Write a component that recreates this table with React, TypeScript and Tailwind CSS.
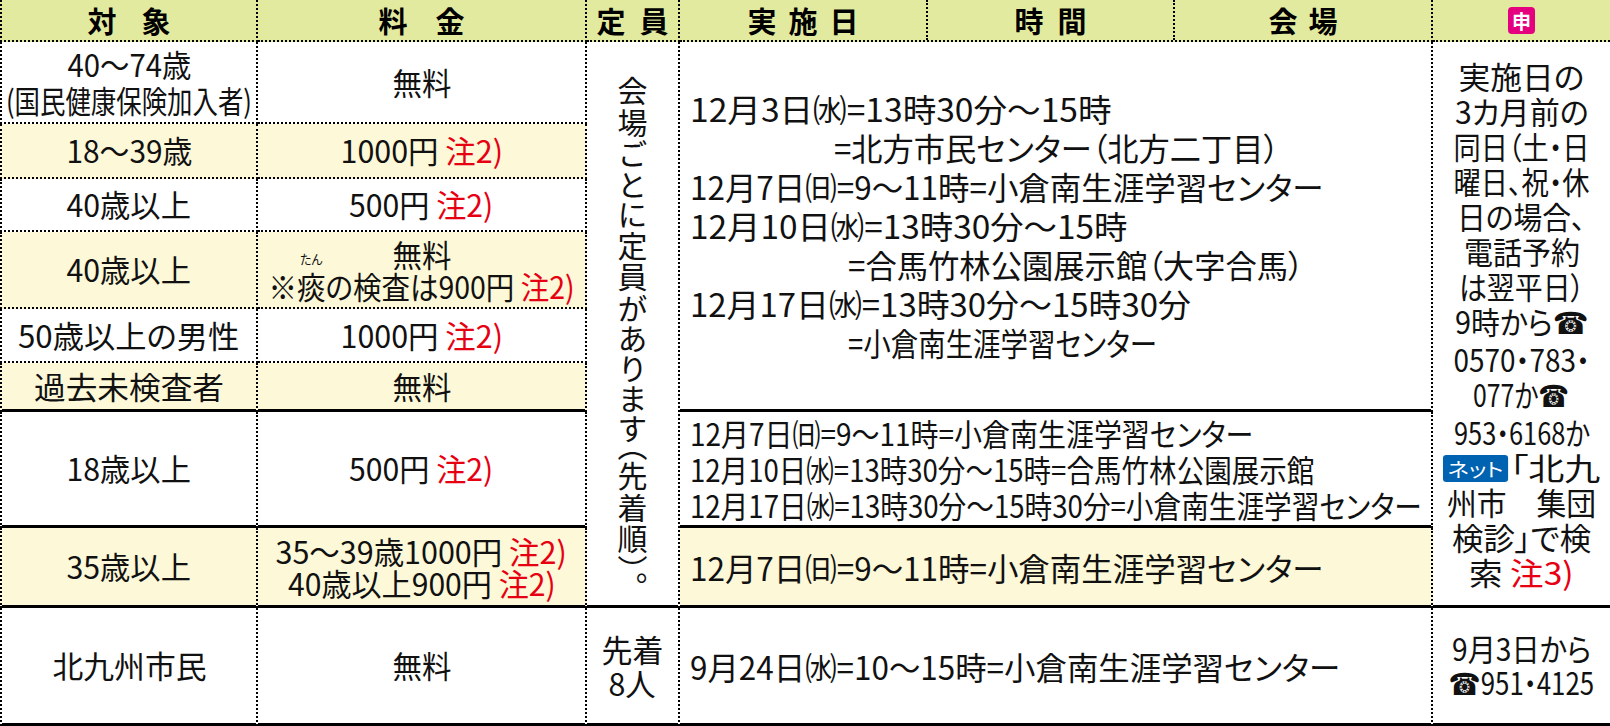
import { useLayoutEffect, useRef, useState, type ReactNode } from "react";

type FitProps = {
  w: number;
  left?: boolean;
  className?: string;
  children: ReactNode;
};

// Squeezes one line of text horizontally so it spans w pixels (the print uses a condensed face).
function Fit({ w, left = false, className = "", children }: FitProps) {
  const ref = useRef<HTMLSpanElement>(null);
  const [scale, setScale] = useState(1);

  useLayoutEffect(() => {
    const measure = () => {
      const natural = ref.current?.offsetWidth ?? 0;
      if (natural > 0) setScale(w / natural);
    };
    measure();
    document.fonts?.ready.then(measure);
  }, [w]);

  return (
    <div className={`flex whitespace-nowrap ${left ? "justify-start" : "justify-center"} ${className}`}>
      <span
        ref={ref}
        className={`inline-block shrink-0 ${left ? "origin-left" : "origin-center"}`}
        style={{ transform: `scaleX(${scale})` }}
      >
        {children}
      </span>
    </div>
  );
}

function Note({ n }: { n: number }) {
  return <span className="text-[#e60012]">注{n})</span>;
}

function Tel() {
  return <span className="font-['DejaVu_Sans',sans-serif]">☎</span>;
}

function NetBadge() {
  return (
    <span className="mr-[2px] inline-flex h-[27px] items-center rounded-[3px] bg-[#0063b1] px-[4px] align-[3px] text-[19px] leading-none text-white">
      ネット
    </span>
  );
}

const head = "flex items-center justify-center bg-[#e2ea9f] text-[29px] font-bold leading-none text-black";
const edgeHead =
  "border-black [border-style:none_dotted_dotted_dotted] [border-width:0_2px_2px_2px]";
const midHead = "border-black [border-style:none_dotted_dotted_none] [border-width:0_2px_2px_0]";
const lastHead = "border-black [border-style:none_none_dotted_none] [border-width:0_0_2px_0]";

const c1Dot = "border-black [border-style:none_dotted_dotted_dotted] [border-width:0_2px_2px_2px]";
const c1Solid = "border-black [border-style:none_dotted_solid_dotted] [border-width:0_2px_3px_2px]";
const midDot = "border-black [border-style:none_dotted_dotted_none] [border-width:0_2px_2px_0]";
const midSolid = "border-black [border-style:none_dotted_solid_none] [border-width:0_2px_3px_0]";
const lastSolid = "border-black [border-style:none_none_solid_none] [border-width:0_0_3px_0]";

const cell = "flex flex-col justify-center text-[31px]";
const cream = "bg-[#fdf8d8]";

export default function App() {
  return (
    <div className="h-[726px] w-[1610px] overflow-hidden bg-white font-['Noto_Sans_CJK_JP','Noto_Sans',sans-serif] text-[#111] [font-feature-settings:'palt']">
      <div className="grid grid-cols-[258px_329px_93px_753px_177px] grid-rows-[42px_82px_55px_53px_77px_54px_49px_116px_80px_118px]">
        {/* header */}
        <div className={`col-start-1 row-start-1 gap-[25px] ${head} ${edgeHead}`}>
          <span>対</span>
          <span>象</span>
        </div>
        <div className={`col-start-2 row-start-1 gap-[28px] ${head} ${midHead}`}>
          <span>料</span>
          <span>金</span>
        </div>
        <div className={`col-start-3 row-start-1 gap-[14px] ${head} ${midHead}`}>
          <span>定</span>
          <span>員</span>
        </div>
        <div className={`col-start-4 row-start-1 grid grid-cols-[248px_247px_1fr] bg-[#e2ea9f] ${midHead}`}>
          <div className={`gap-[12px] ${head} border-black [border-style:none_dotted_none_none] [border-width:0_2px_0_0]`}>
            <span>実</span>
            <span>施</span>
            <span>日</span>
          </div>
          <div className={`gap-[14px] ${head} border-black [border-style:none_dotted_none_none] [border-width:0_2px_0_0]`}>
            <span>時</span>
            <span>間</span>
          </div>
          <div className={`gap-[11px] ${head}`}>
            <span>会</span>
            <span>場</span>
          </div>
        </div>
        <div className={`col-start-5 row-start-1 ${head} ${lastHead}`}>
          <span className="flex h-[27px] w-[27px] items-center justify-center rounded-[4px] bg-[#e4007f] text-[19px] font-bold leading-none text-white">
            申
          </span>
        </div>

        {/* 対象 / 料金 */}
        <div className={`col-start-1 row-start-2 leading-[36px] ${cell} ${c1Dot}`}>
          <Fit w={124}>40～74歳</Fit>
          <Fit w={246}>(国民健康保険加入者)</Fit>
        </div>
        <div className={`col-start-2 row-start-2 ${cell} ${midDot}`}>
          <Fit w={59}>無料</Fit>
        </div>

        <div className={`col-start-1 row-start-3 ${cream} ${cell} ${c1Dot}`}>
          <Fit w={126}>18～39歳</Fit>
        </div>
        <div className={`col-start-2 row-start-3 ${cream} ${cell} ${midDot}`}>
          <Fit w={162}>
            1000円 <Note n={2} />
          </Fit>
        </div>

        <div className={`col-start-1 row-start-4 ${cell} ${c1Dot}`}>
          <Fit w={124}>40歳以上</Fit>
        </div>
        <div className={`col-start-2 row-start-4 ${cell} ${midDot}`}>
          <Fit w={144}>
            500円 <Note n={2} />
          </Fit>
        </div>

        <div className={`col-start-1 row-start-5 ${cream} ${cell} ${c1Dot}`}>
          <Fit w={124}>40歳以上</Fit>
        </div>
        <div className={`col-start-2 row-start-5 leading-[32px] ${cream} ${cell} ${midDot}`}>
          <Fit w={59}>無料</Fit>
          <Fit w={306}>
            ※
            <span className="relative">
              痰
              <span className="absolute -top-[11px] left-1/2 -translate-x-1/2 text-[13px] leading-none">たん</span>
            </span>
            の検査は900円 <Note n={2} />
          </Fit>
        </div>

        <div className={`col-start-1 row-start-6 ${cell} ${c1Dot}`}>
          <Fit w={221}>50歳以上の男性</Fit>
        </div>
        <div className={`col-start-2 row-start-6 ${cell} ${midDot}`}>
          <Fit w={162}>
            1000円 <Note n={2} />
          </Fit>
        </div>

        <div className={`col-start-1 row-start-7 ${cream} ${cell} ${c1Solid}`}>
          <Fit w={190}>過去未検査者</Fit>
        </div>
        <div className={`col-start-2 row-start-7 ${cream} ${cell} ${midSolid}`}>
          <Fit w={59}>無料</Fit>
        </div>

        <div className={`col-start-1 row-start-8 ${cell} ${c1Solid}`}>
          <Fit w={124}>18歳以上</Fit>
        </div>
        <div className={`col-start-2 row-start-8 ${cell} ${midSolid}`}>
          <Fit w={144}>
            500円 <Note n={2} />
          </Fit>
        </div>

        <div className={`col-start-1 row-start-9 ${cream} ${cell} ${c1Solid}`}>
          <Fit w={124}>35歳以上</Fit>
        </div>
        <div className={`col-start-2 row-start-9 leading-[32px] ${cream} ${cell} ${midSolid}`}>
          <Fit w={291}>
            35～39歳1000円 <Note n={2} />
          </Fit>
          <Fit w={268}>
            40歳以上900円 <Note n={2} />
          </Fit>
        </div>

        <div className={`col-start-1 row-start-10 ${cell} ${c1Solid}`}>
          <Fit w={154}>北九州市民</Fit>
        </div>
        <div className={`col-start-2 row-start-10 ${cell} ${midSolid}`}>
          <Fit w={59}>無料</Fit>
        </div>

        {/* 定員 */}
        <div className={`col-start-3 row-start-2 row-span-8 flex items-center justify-center pt-[18px] ${midSolid}`}>
          <div className="text-[30px] leading-none tracking-[1.6px] [font-feature-settings:'vpal'] [writing-mode:vertical-rl]">
            会場ごとに定員があります（先着順）。
          </div>
        </div>
        <div className={`col-start-3 row-start-10 leading-[34px] ${cell} ${midSolid}`}>
          <Fit w={62}>先着</Fit>
          <Fit w={47}>8人</Fit>
        </div>

        {/* 実施日・時間・会場 */}
        <div className={`col-start-4 row-start-2 row-span-6 pl-[10px] text-[32px] leading-[39px] ${cell} ${midSolid}`}>
          <Fit left w={422}>12月3日㈬=13時30分～15時</Fit>
          <Fit left w={445} className="pl-[144px]">
            =北方市民センター（北方二丁目）
          </Fit>
          <Fit left w={633}>12月7日㈰=9～11時=小倉南生涯学習センター</Fit>
          <Fit left w={437}>12月10日㈬=13時30分～15時</Fit>
          <Fit left w={456} className="pl-[158px]">
            =合馬竹林公園展示館（大字合馬）
          </Fit>
          <Fit left w={501}>12月17日㈬=13時30分～15時30分</Fit>
          <Fit left w={309} className="pl-[158px]">
            =小倉南生涯学習センター
          </Fit>
        </div>
        <div className={`col-start-4 row-start-8 pl-[10px] text-[30px] leading-[36px] ${cell} ${midSolid}`}>
          <Fit left w={563}>12月7日㈰=9～11時=小倉南生涯学習センター</Fit>
          <Fit left w={624}>12月10日㈬=13時30分～15時=合馬竹林公園展示館</Fit>
          <Fit left w={732}>12月17日㈬=13時30分～15時30分=小倉南生涯学習センター</Fit>
        </div>
        <div className={`col-start-4 row-start-9 pl-[10px] ${cream} ${cell} text-[32px] ${midSolid}`}>
          <Fit left w={633}>12月7日㈰=9～11時=小倉南生涯学習センター</Fit>
        </div>
        <div className={`col-start-4 row-start-10 pl-[10px] ${cell} text-[32px] ${midSolid}`}>
          <Fit left w={650}>9月24日㈬=10～15時=小倉南生涯学習センター</Fit>
        </div>

        {/* 申込 */}
        <div className={`col-start-5 row-start-2 row-span-8 leading-[35px] ${cell} text-[30px] ${lastSolid}`}>
          <Fit w={126}>実施日の</Fit>
          <Fit w={134}>3カ月前の</Fit>
          <Fit w={136}>同日（土・日</Fit>
          <Fit w={136}>曜日、祝・休</Fit>
          <Fit w={128}>日の場合、</Fit>
          <Fit w={116}>電話予約</Fit>
          <Fit w={126}>は翌平日）</Fit>
          <Fit w={134}>
            9時から<Tel />
          </Fit>
          <Fit w={136}>0570・783・</Fit>
          <Fit w={96}>
            077か<Tel />
          </Fit>
          <Fit w={136}>953・6168か</Fit>
          <Fit w={157}>
            <NetBadge />「北九
          </Fit>
          <Fit w={149}>州市　集団</Fit>
          <Fit w={139}>検診」で検</Fit>
          <Fit w={105}>
            索 <Note n={3} />
          </Fit>
        </div>
        <div className={`col-start-5 row-start-10 leading-[34px] ${cell} text-[30px] ${lastSolid}`}>
          <Fit w={139}>9月3日から</Fit>
          <Fit w={146}>
            <Tel />
            951・4125
          </Fit>
        </div>
      </div>
    </div>
  );
}
